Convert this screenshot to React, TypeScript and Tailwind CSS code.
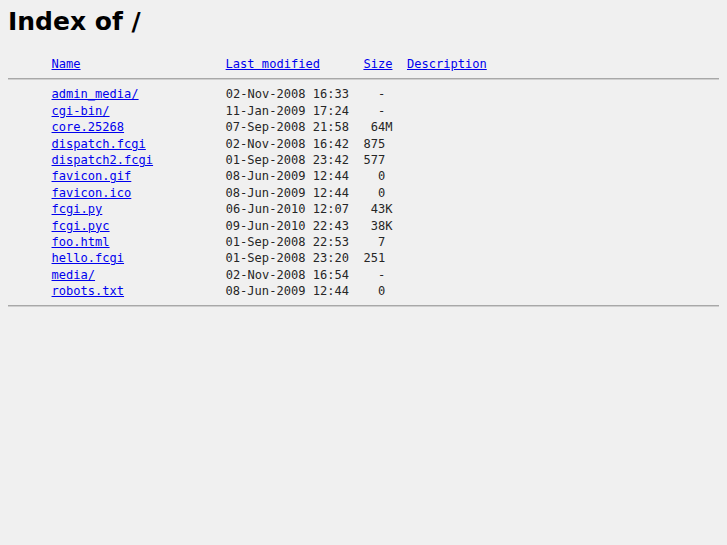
const files = [
  { name: "admin_media/", date: "02-Nov-2008 16:33", size: "  - " },
  { name: "cgi-bin/", date: "11-Jan-2009 17:24", size: "  - " },
  { name: "core.25268", date: "07-Sep-2008 21:58", size: " 64M" },
  { name: "dispatch.fcgi", date: "02-Nov-2008 16:42", size: "875 " },
  { name: "dispatch2.fcgi", date: "01-Sep-2008 23:42", size: "577 " },
  { name: "favicon.gif", date: "08-Jun-2009 12:44", size: "  0 " },
  { name: "favicon.ico", date: "08-Jun-2009 12:44", size: "  0 " },
  { name: "fcgi.py", date: "06-Jun-2010 12:07", size: " 43K" },
  { name: "fcgi.pyc", date: "09-Jun-2010 22:43", size: " 38K" },
  { name: "foo.html", date: "01-Sep-2008 22:53", size: "  7 " },
  { name: "hello.fcgi", date: "01-Sep-2008 23:20", size: "251 " },
  { name: "media/", date: "02-Nov-2008 16:54", size: "  - " },
  { name: "robots.txt", date: "08-Jun-2009 12:44", size: "  0 " },
];

const linkCls = "text-[#0000ee] underline";

function Rule({ className }: { className: string }) {
  return (
    <div
      className={`h-[2px] border-t border-b border-t-[#a8a8a8] border-b-[#cfcfcf] border-b-dotted ${className}`}
    />
  );
}

export default function App() {
  return (
    <div className="min-h-screen bg-[#f0f0f0] px-2 pt-[7px]">
      <h1 className="m-0 font-['DejaVu_Sans',sans-serif] text-[25px] font-bold leading-[29px] text-black">
        Index of /
      </h1>

      <div className="mt-[20px] whitespace-pre font-['DejaVu_Sans_Mono',monospace] text-[12.05px] leading-[16.4px] text-[#262626]">
        <div>
          {"      "}
          <a href="#" className={linkCls}>Name</a>
          {" ".repeat(20)}
          <a href="#" className={linkCls}>Last modified</a>
          {"      "}
          <a href="#" className={linkCls}>Size</a>
          {"  "}
          <a href="#" className={linkCls}>Description</a>
        </div>

        <Rule className="mt-[6px] mb-[6px]" />

        {files.map((f) => (
          <div key={f.name}>
            {"      "}
            <a href="#" className={linkCls}>{f.name}</a>
            {" ".repeat(24 - f.name.length)}
            {f.date}
            {"  "}
            {f.size}
          </div>
        ))}

        <Rule className="mt-[5px]" />
      </div>
    </div>
  );
}
